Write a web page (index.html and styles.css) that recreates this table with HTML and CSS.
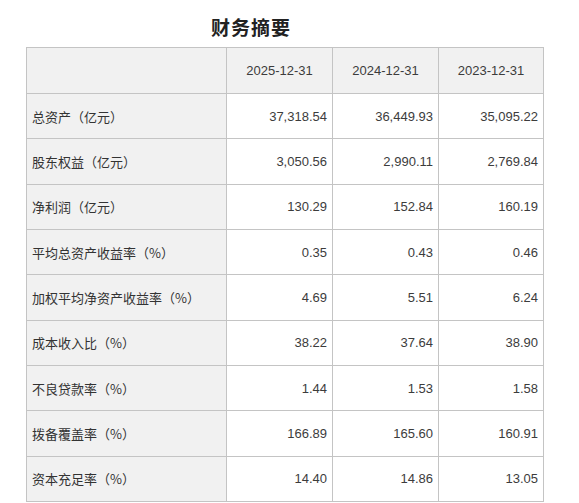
FILE: index.html
```html
<!DOCTYPE html>
<html lang="zh-CN">
  <head>
    <meta charset="UTF-8" />
    <title>财务摘要</title>
    <link rel="stylesheet" href="styles.css">
  </head>
  <body>
    <div class="container">
      <h2>财务摘要</h2>

      <table class="summary">
        <thead>
          <tr>
            <th class="label"></th>
            <th>2025-12-31</th>
            <th>2024-12-31</th>
            <th>2023-12-31</th>
          </tr>
        </thead>
        <tbody>
          <tr>
            <td class="label">总资产（亿元）</td>
            <td>37,318.54</td>
            <td>36,449.93</td>
            <td>35,095.22</td>
          </tr>
          <tr>
            <td class="label">股东权益（亿元）</td>
            <td>3,050.56</td>
            <td>2,990.11</td>
            <td>2,769.84</td>
          </tr>
          <tr>
            <td class="label">净利润（亿元）</td>
            <td>130.29</td>
            <td>152.84</td>
            <td>160.19</td>
          </tr>
          <tr>
            <td class="label">平均总资产收益率（%）</td>
            <td>0.35</td>
            <td>0.43</td>
            <td>0.46</td>
          </tr>
          <tr>
            <td class="label">加权平均净资产收益率（%）</td>
            <td>4.69</td>
            <td>5.51</td>
            <td>6.24</td>
          </tr>
          <tr>
            <td class="label">成本收入比（%）</td>
            <td>38.22</td>
            <td>37.64</td>
            <td>38.90</td>
          </tr>
          <tr>
            <td class="label">不良贷款率（%）</td>
            <td>1.44</td>
            <td>1.53</td>
            <td>1.58</td>
          </tr>
          <tr>
            <td class="label">拨备覆盖率（%）</td>
            <td>166.89</td>
            <td>165.60</td>
            <td>160.91</td>
          </tr>
          <tr>
            <td class="label">资本充足率（%）</td>
            <td>14.40</td>
            <td>14.86</td>
            <td>13.05</td>
          </tr>
        </tbody>
      </table>
    </div>
  </body>
</html>
```

FILE: styles.css
```css
body {
  margin: 0;
  padding: 0 0 0 26px;
  font-family: "Liberation Sans", "Noto Sans CJK SC", sans-serif;
  color: #333;
  background: white;
}
.container {
  width: 518px;
}
h2 {
  margin: 0;
  padding: 14px 0 0 185px;
  height: 33px;
  font-family: "Noto Sans CJK SC", serif;
  font-size: 19px;
  font-weight: bold;
  line-height: 26px;
  color: #222;
  letter-spacing: 1px;
}
.summary {
  width: 518px;
  border-collapse: collapse;
  table-layout: fixed;
  font-size: 13px;
}
.summary th,
.summary td {
  border: 1px solid #c4c4c4;
  padding: 0 5px;
  height: 44.33px;
  text-align: right;
  font-weight: normal;
  color: #3c3c3c;
}
.summary th {
  height: 45px;
  text-align: center;
  background: #f1f1f1;
}
.summary th:nth-child(1),
.summary td:nth-child(1) {
  width: 189px;
}
.summary th:nth-child(2),
.summary td:nth-child(2),
.summary th:nth-child(3),
.summary td:nth-child(3) {
  width: 95px;
}
.summary .label {
  text-align: left;
  background: #f1f1f1;
  font-family: "Noto Sans CJK SC", sans-serif;
  color: #333;
}
```
